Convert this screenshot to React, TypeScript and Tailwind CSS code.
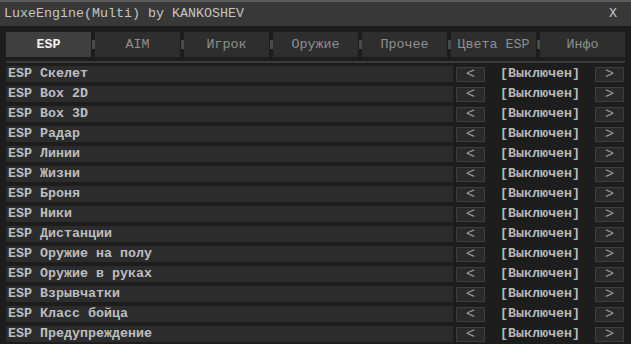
const tabs = ["ESP", "AIM", "Игрок", "Оружие", "Прочее", "Цвета ESP", "Инфо"];

const rows = [
  "ESP Скелет",
  "ESP Box 2D",
  "ESP Box 3D",
  "ESP Радар",
  "ESP Линии",
  "ESP Жизни",
  "ESP Броня",
  "ESP Ники",
  "ESP Дистанции",
  "ESP Оружие на полу",
  "ESP Оружие в руках",
  "ESP Взрывчатки",
  "ESP Класс бойца",
  "ESP Предупреждение",
];

function Tabs() {
  return (
    <div className="flex h-[25px]">
      {tabs.map((t, i) => (
        <div key={t} className="flex">
          {i > 0 ? (
            <div className="flex w-[4px] items-center justify-center">
              <div className="h-[9px] w-[3px] bg-[#4a4a4a]" />
            </div>
          ) : null}
          <div
            className={
              i === 0
                ? "flex w-[85px] items-center justify-center bg-[#404040] font-bold text-[#f0f0f0]"
                : "flex w-[85px] items-center justify-center bg-[#2e2e2e] text-[#8e8e8e]"
            }
          >
            {t}
          </div>
        </div>
      ))}
    </div>
  );
}

function Row({ label }: { label: string }) {
  return (
    <div className="flex h-[16px] items-center">
      <div className="flex h-[16px] flex-1 items-center bg-[#2c2c2c] pl-[2px] font-bold text-[#bdbdbd]">
        {label}
      </div>
      <div className="ml-[3px] flex h-[15px] w-[29px] items-center justify-center border border-[#3e3e3e] bg-[#2a2a2a] text-[15px] text-[#a0a0a0]">
        &lt;
      </div>
      <div className="flex w-[110px] justify-center font-bold text-[#b8b8b8]">[Выключен]</div>
      <div className="flex h-[15px] w-[29px] items-center justify-center border border-[#3e3e3e] bg-[#2a2a2a] text-[15px] text-[#a0a0a0]">
        &gt;
      </div>
    </div>
  );
}

export default function App() {
  return (
    <div
      className="flex h-[344px] w-[631px] flex-col overflow-hidden bg-[#1d1d1d] text-[13.33px] leading-none"
      style={{ fontFamily: '"Liberation Mono", "DejaVu Sans Mono", monospace' }}
    >
      <div className="flex h-[26px] items-center justify-between border-t-2 border-[#5c5c5c] bg-[#383838] pl-[4px] pr-[14px] text-[#c4c4c4]">
        <span>LuxeEngine(Multi) by KANKOSHEV</span>
        <span>X</span>
      </div>
      <div className="flex flex-col pl-[6px] pr-[7px] pt-[6px]">
        <Tabs />
        <div className="mt-[4px] h-[2px] w-[619px] bg-[#3a3a3a]" />
        <div className="mt-[3px] flex flex-col gap-[4px]">
          {rows.map((r) => (
            <Row key={r} label={r} />
          ))}
        </div>
      </div>
    </div>
  );
}
